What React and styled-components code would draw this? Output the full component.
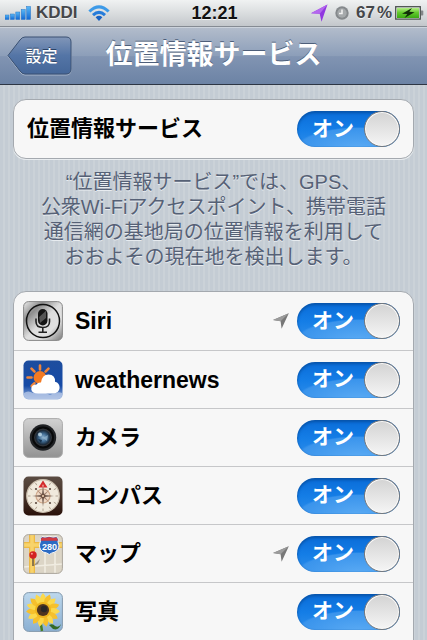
import React, { useState } from "react";
import styled, { createGlobalStyle } from "styled-components";

const GlobalStyle = createGlobalStyle`
  * { box-sizing: border-box; }
  body {
    margin: 0;
    background: #c7ced6;
    font-family: "Liberation Sans", "Noto Sans CJK JP", sans-serif;
  }
  svg { display: block; flex: none; }
`;

const Screen = styled.div`
  height: 100vh;
  display: flex;
  flex-direction: column;
`;

const StatusBar = styled.header`
  flex: none;
  height: 27px;
  padding: 0 3px 0 5px;
  display: grid;
  grid-template-columns: 1fr auto 1fr;
  align-items: center;
  background: linear-gradient(#f0f2f2, #dadddf 50%, #c3c7cb);
  border-bottom: 1px solid #858b93;
  color: #45474a;
  font-size: 17px;
  line-height: 26px;
  font-weight: 700;
  text-shadow: 0 1px 0 #f4f5f5;
`;

const StatusGroup = styled.div`
  display: flex;
  align-items: center;
  justify-content: ${(p) => (p.$end ? "flex-end" : "flex-start")};
  gap: ${(p) => (p.$end ? 7 : 5)}px;
`;

const Carrier = styled.span`
  margin-right: 5px;
`;

const Percent = styled.span`
  display: flex;
  gap: 2px;
  margin-right: -4px;
`;

const Clock = styled.time`
  color: #111;
  font-size: 18px;
`;

const NavBar = styled.nav`
  flex: none;
  height: 58px;
  padding: 0 6px;
  display: grid;
  grid-template-columns: 1fr auto 1fr;
  align-items: center;
  background: linear-gradient(#b2bccb, #8c9eb9 50%, #8194b2 51%, #6c83a5);
  border-top: 1px solid #ccd3dc;
  border-bottom: 1px solid #2d3644;
`;

const BackButton = styled.button`
  position: relative;
  width: 66px;
  height: 40px;
  padding: 0 0 2px 5px;
  border: 0;
  background: none;
  color: #fff;
  font-family: inherit;
  font-size: 16px;
  font-weight: 500;
  text-shadow: 0 -1px 0 #2c4468;
  cursor: pointer;
`;

const BackShape = styled.svg`
  position: absolute;
  inset: 0;
`;

const BackText = styled.span`
  position: relative;
`;

const Title = styled.h1`
  margin: 0;
  padding-bottom: 2px;
  color: #fff;
  font-size: 27px;
  line-height: 36px;
  font-weight: 700;
  text-shadow: 0 -1px 0 #4e5f7a;
`;

const Content = styled.main`
  flex: 1;
  min-height: 0;
  overflow-y: auto;
  scrollbar-width: none;
  padding: 14px 13px 0;
  background: repeating-linear-gradient(90deg, #c4ccd4 0 3px, #cbd2d8 3px 5px);
`;

const Group = styled.ul`
  list-style: none;
  margin: 0;
  padding: 0;
  background: #f7f7f7;
  border: 1px solid #a4a9af;
  border-radius: ${(p) => (p.$open ? "13px 13px 0 0" : "13px")};
  box-shadow: 0 1px 0 #e9edf0;
`;

const Row = styled.li`
  height: 58px;
  padding: 0 13px;
  display: flex;
  align-items: center;
  gap: 12px;

  & + & {
    border-top: 1px solid #c6c7c9;
  }
`;

const RowLabel = styled.label`
  flex: 1;
  font-size: ${(p) => (p.$latin ? 23 : 22)}px;
  line-height: 30px;
  font-weight: 700;
  color: #000;
`;

const AppIcon = styled.svg`
  margin-left: -4px;
`;

const Controls = styled.div`
  display: flex;
  align-items: center;
  gap: 8px;
`;

const SwitchTrack = styled.span`
  position: relative;
  flex: none;
  width: 103px;
  height: 36px;
  display: flex;
  align-items: center;
  justify-content: ${(p) => (p.$on ? "space-between" : "flex-start")};
  gap: 8px;
  padding-left: ${(p) => (p.$on ? 15 : 0)}px;
  border-radius: 18px;
  background: ${(p) =>
    p.$on
      ? "radial-gradient(ellipse 64px 22px at 62px 38px, #5babf4 0, #3a94ec 94%, transparent 100%), linear-gradient(#0a6cd8, #147de6 50%, #2f8eea)"
      : "linear-gradient(#d0d0d0, #f6f6f6)"};
  box-shadow: inset 0 2px 3px ${(p) => (p.$on ? "#0753a8" : "#999")}, inset 0 0 1px #1759a5;
  color: ${(p) => (p.$on ? "#fff" : "#777")};
  font-size: 21px;
  line-height: 32px;
  font-weight: 700;
  white-space: nowrap;
`;

const SwitchText = styled.span`
  padding-bottom: 1px;
`;

const SwitchKnob = styled.span`
  width: 36px;
  height: 36px;
  flex: none;
  border: 1px solid #77797c;
  border-radius: 50%;
  background: linear-gradient(#d3d3d3, #f5f5f5);
  box-shadow: inset 0 0 0 1px #fafafa;
`;

const SwitchInput = styled.input`
  position: absolute;
  inset: 0;
  width: 100%;
  height: 100%;
  margin: 0;
  opacity: 0;
  cursor: pointer;
`;

const Description = styled.p`
  margin: 0;
  padding: 11px 0 21px;
  color: #566176;
  font-size: 20px;
  line-height: 25px;
  text-align: center;
  text-shadow: 0 1px 0 #e8ecf0;
`;

function SignalIcon() {
  return (
    <svg width="26" height="14" viewBox="0 0 26 14" aria-hidden="true">
      <defs>
        <linearGradient id="signal" x1="0" x2="0" y1="0" y2="1">
          <stop offset="0" stopColor="#58b8f6" />
          <stop offset="1" stopColor="#1268d4" />
        </linearGradient>
      </defs>
      <g fill="url(#signal)" stroke="#2877c8" strokeWidth=".5">
        <rect x="0" y="9" width="4" height="4.5" />
        <rect x="5.4" y="8" width="4" height="5.5" />
        <rect x="10.8" y="6" width="4" height="7.5" />
        <rect x="16.2" y="3.5" width="4" height="10" />
        <rect x="21.6" y=".5" width="4" height="13" />
      </g>
    </svg>
  );
}

function WifiIcon() {
  return (
    <svg width="22" height="17" viewBox="0 0 22 17" fill="none" aria-hidden="true">
      <g strokeWidth="3">
        <path d="M1.4 6.5Q11-2.8 20.6 6.5" stroke="#3d9ae8" />
        <path d="M5 10.2Q11 4.6 17 10.2" stroke="#267cda" />
      </g>
      <path d="M7.6 12.2Q11 9.5 14.4 12.2L11 16Z" fill="#1762c4" />
    </svg>
  );
}

function StatusArrow() {
  return (
    <svg width="17" height="18" viewBox="0 0 17 18" aria-hidden="true">
      <path d="M16.5 .5L0 9.2L8.7 9.7L10.5 17.7Z" fill="#9037e0" />
      <path d="M16.5 .5L0 9.2L8.7 9.7Z" fill="#b467ee" />
    </svg>
  );
}

function AlarmIcon() {
  return (
    <svg width="14" height="14" viewBox="0 0 14 14" aria-hidden="true">
      <circle cx="7" cy="7" r="6.7" fill="#85898c" />
      <circle cx="7" cy="7" r="4.7" fill="#a5a9ab" />
      <path d="M7 3.5V7.5H4" fill="none" stroke="#f2f2f2" strokeWidth="1.5" />
    </svg>
  );
}

function BatteryIcon() {
  return (
    <svg width="29" height="14" viewBox="0 0 29 14" aria-hidden="true">
      <defs>
        <linearGradient id="battery" x1="0" x2="0" y1="0" y2="1">
          <stop offset="0" stopColor="#b4ee86" />
          <stop offset=".45" stopColor="#64ca2e" />
          <stop offset="1" stopColor="#39a812" />
        </linearGradient>
      </defs>
      <rect x=".7" y=".7" width="24.6" height="12.4" fill="#e9eee9" stroke="#4c5350" strokeWidth="1.3" />
      <rect x="2" y="2" width="22" height="10" fill="url(#battery)" />
      <path d="M26 4.5h1.5q.8 0 .8 1v3q0 1-.8 1H26z" fill="#838789" />
      <path d="M17 2L7 7.7L12.3 8L9.5 12L19.5 6.2L14.3 5.8Z" fill="#112e08" />
    </svg>
  );
}

function LocationArrow() {
  return (
    <svg width="16" height="16" viewBox="0 0 16 16" role="img" aria-label="位置情報を使用中">
      <path d="M15.8 .3L0 6.9L7.6 8.2L8.6 15.8Z" fill="#777" />
      <path d="M15.8 .3L0 6.9L7.6 8.2Z" fill="#9b9b9b" />
    </svg>
  );
}

function SiriIcon() {
  return (
    <AppIcon width="40" height="40" viewBox="0 0 40 40" aria-hidden="true">
      <defs>
        <linearGradient id="siri" x1="0" y1="0" x2="1" y2="1">
          <stop offset="0" stopColor="#eee" />
          <stop offset=".25" stopColor="#8d8d8d" />
          <stop offset=".5" stopColor="#ddd" />
          <stop offset=".72" stopColor="#e2e2e2" />
          <stop offset="1" stopColor="#777" />
        </linearGradient>
      </defs>
      <rect x=".6" y=".6" width="38.8" height="38.8" rx="5" fill="url(#siri)" stroke="#888" />
      <circle cx="20" cy="20" r="16.5" fill="none" stroke="#111" strokeWidth="1.5" />
      <rect x="15" y="8" width="9.5" height="16.5" rx="4.7" fill="#151515" />
      <path d="M16.2 16L23 9.7V17L17 22Z" fill="#555" />
      <path d="M13 17.5V20.5Q13 26.5 19.8 26.5T26.5 20.5V17.5M19.8 26.5V31M15.5 31.3H24" fill="none" stroke="#222" strokeWidth="1.6" />
    </AppIcon>
  );
}

function WeatherIcon() {
  return (
    <AppIcon width="40" height="40" viewBox="0 0 40 40" aria-hidden="true">
      <defs>
        <linearGradient id="sky" x1="0" x2="0" y1="0" y2="1">
          <stop offset="0" stopColor="#1d4d9e" />
          <stop offset=".65" stopColor="#164aa6" />
          <stop offset="1" stopColor="#9db8df" />
        </linearGradient>
      </defs>
      <rect x=".5" y=".5" width="39" height="39" rx="5" fill="url(#sky)" />
      <path d="M1 33Q5 30 10 33Q20 30 27 35Q34 31 39 33V36Q38 39 34 39H6Q2 39 1 36Z" fill="#b9cae8" opacity=".75" />
      <circle cx="17" cy="17.5" r="6.4" fill="#f47a22" />
      <path d="M17 5.5V9.5M8.5 8.7L11.5 11.7M4.5 17.5H8.5M25.5 8.7L22.5 11.7M8.7 26L11.5 23.2" stroke="#f0853a" strokeWidth="2.6" strokeLinecap="round" />
      <path d="M16 33.5Q9 33.8 8.3 29.5Q8 24.5 13.5 24.5Q15 22 18 22.5Q19 14.5 25.5 14.5Q32.5 14.8 32 21.8Q36.8 23 36.6 28Q36 33 30 33.5Z" fill="#fff" />
    </AppIcon>
  );
}

function CameraIcon() {
  return (
    <AppIcon width="40" height="40" viewBox="0 0 40 40" aria-hidden="true">
      <defs>
        <linearGradient id="body" x1="0" x2="0" y1="0" y2="1">
          <stop offset="0" stopColor="#d2d2d2" />
          <stop offset="1" stopColor="#929292" />
        </linearGradient>
        <radialGradient id="lens">
          <stop offset="0" stopColor="#91b4d0" />
          <stop offset=".5" stopColor="#426d94" />
          <stop offset="1" stopColor="#14202d" />
        </radialGradient>
      </defs>
      <rect x=".6" y=".6" width="38.8" height="38.8" rx="5" fill="url(#body)" stroke="#aaa" />
      <circle cx="20" cy="19.5" r="13.2" fill="#202225" />
      <circle cx="20" cy="19.5" r="10" fill="#30343a" stroke="#08090a" strokeWidth="2" />
      <circle cx="20" cy="19.5" r="7.6" fill="url(#lens)" />
      <circle cx="17" cy="16.5" r="2" fill="#c6deec" opacity=".8" />
      <path d="M20 20L25 17L24 23Z" fill="#9bbbd3" opacity=".65" />
      <path d="M15 21L19 22L18 25Z" fill="#15304a" />
    </AppIcon>
  );
}

const compassAngles = [0, 30, 60, 90, 120, 150, 180, 210, 240, 270, 300, 330];

function CompassIcon() {
  return (
    <AppIcon width="40" height="40" viewBox="0 0 40 40" aria-hidden="true">
      <defs>
        <linearGradient id="wood" x1="0" x2="0" y1="0" y2="1">
          <stop offset="0" stopColor="#5b4c42" />
          <stop offset=".5" stopColor="#47342b" />
          <stop offset="1" stopColor="#291009" />
        </linearGradient>
      </defs>
      <rect x=".5" y=".5" width="39" height="39" rx="5" fill="url(#wood)" />
      <circle cx="20" cy="20" r="16.3" fill="#f1eadd" stroke="#cbbfae" strokeWidth="1.2" />
      {compassAngles.map((angle) => (
        <path key={angle} d="M20 5V7.5" stroke="#a39382" strokeWidth=".8" transform={`rotate(${angle} 20 20)`} />
      ))}
      <circle cx="20" cy="20" r="7" fill="#efd8c4" stroke="#d0a98c" strokeWidth="1.2" />
      <path d="M20 9L21 19L31 20L21 21L20 31L19 21L9 20L19 19Z" fill="#675247" />
      <path d="M13.5 13.5L20 18.8L26.5 13.5L21.2 20L26.5 26.5L20 21.2L13.5 26.5L18.8 20Z" fill="#a58472" />
      <g fill="#5d4a40">
        <circle cx="13" cy="13" r="1.1" />
        <circle cx="27" cy="13" r="1.1" />
        <circle cx="27" cy="27" r="1.1" />
        <circle cx="13" cy="27" r="1.1" />
      </g>
      <circle cx="20" cy="20" r="1.8" fill="#d5b59a" stroke="#604437" />
      <path d="M20 4.5L24.5 11.5H15.5Z" fill="#d42b2c" />
      <path d="M20 8L21 10.5H19Z" fill="#f2bab0" />
    </AppIcon>
  );
}

function MapIcon() {
  return (
    <AppIcon width="40" height="40" viewBox="0 0 40 40" aria-hidden="true">
      <defs>
        <clipPath id="mapClip"><rect x=".5" y=".5" width="39" height="39" rx="5" /></clipPath>
      </defs>
      <g clipPath="url(#mapClip)">
        <rect width="40" height="40" fill="#dcd5c6" />
        <path d="M22 14V40M32 19V40M0 33L40 30" stroke="#f0ece1" strokeWidth="1.6" />
        <path d="M0 11H40" stroke="#edb944" strokeWidth="6" />
        <path d="M9 0V40" stroke="#edb944" strokeWidth="6" />
        <path d="M9 0V40M0 11H40" stroke="#f8d36a" strokeWidth="3.5" />
      </g>
      <path d="M17.5 7Q16.5 4 19 2.5Q22 4 26 2.2Q30 4 33.5 2.5Q36.5 5 35 8Q38 15 32 18Q28 19 26.3 20.5Q24 18.5 20 18Q14.5 14 17.5 7Z" fill="#2c6bc4" stroke="#f5f5f5" />
      <path d="M17.7 6.8Q17.5 4.2 19.3 3.2Q22 4.5 26.2 3Q30 4.5 33.2 3.2Q35.2 5 34.8 6.8Z" fill="#d13b42" />
      <text x="26.4" y="15.5" textAnchor="middle" fontSize="9" fontWeight="700" fill="#fff">280</text>
      <path d="M10 22V32" stroke="#54483d" strokeWidth="1.3" />
      <path d="M10 32L17 25L15 30Z" fill="#786f62" opacity=".65" />
      <circle cx="10" cy="21" r="3.7" fill="#d32224" />
      <circle cx="8.9" cy="19.8" r="1" fill="#f49c91" />
      <rect x=".6" y=".6" width="38.8" height="38.8" rx="5" fill="none" stroke="#aaa59c" />
    </AppIcon>
  );
}

const petalAngles = [0, 24, 48, 72, 96, 120, 144, 168, 192, 216, 240, 264, 288, 312, 336];

function PhotosIcon() {
  return (
    <AppIcon width="40" height="40" viewBox="0 0 40 40" aria-hidden="true">
      <defs>
        <linearGradient id="photoSky" x1="0" x2="0" y1="0" y2="1">
          <stop offset="0" stopColor="#bdd8ed" />
          <stop offset="1" stopColor="#8aafd2" />
        </linearGradient>
      </defs>
      <rect x=".6" y=".6" width="38.8" height="38.8" rx="5" fill="url(#photoSky)" stroke="#8499ac" />
      <path d="M18 24Q17 31 19 39" fill="none" stroke="#477e25" strokeWidth="2.5" />
      <path d="M26 33Q30 31 32 34Q36 36 38 32Q36 39 30 37Z" fill="#356a27" />
      <g transform="translate(20 18)">
        {petalAngles.map((angle) => (
          <path key={angle} d="M0-4Q-6-11 0-17Q6-11 0-4Z" fill={angle % 48 ? "#f6c02c" : "#fbd94c"} transform={`rotate(${angle})`} />
        ))}
        <circle r="8" fill="#eeb51e" />
        <circle r="6.1" fill="#4f3520" />
        <circle cx="1" cy="-1" r="3.2" fill="#292727" />
      </g>
    </AppIcon>
  );
}

const apps = [
  { id: "siri", name: "Siri", Icon: SiriIcon, latin: true, recent: true },
  { id: "weather", name: "weathernews", Icon: WeatherIcon, latin: true },
  { id: "camera", name: "カメラ", Icon: CameraIcon },
  { id: "compass", name: "コンパス", Icon: CompassIcon },
  { id: "maps", name: "マップ", Icon: MapIcon, recent: true },
  { id: "photos", name: "写真", Icon: PhotosIcon },
];

function Switch({ id }) {
  const [on, setOn] = useState(true);
  return (
    <SwitchTrack $on={on}>
      {on && <SwitchText aria-hidden="true">オン</SwitchText>}
      <SwitchKnob />
      {!on && <SwitchText aria-hidden="true">オフ</SwitchText>}
      <SwitchInput id={id} type="checkbox" role="switch" checked={on} onChange={() => setOn(!on)} />
    </SwitchTrack>
  );
}

export default function App() {
  return (
    <Screen lang="ja">
      <GlobalStyle />
      <StatusBar>
        <StatusGroup>
          <SignalIcon />
          <Carrier>KDDI</Carrier>
          <WifiIcon />
        </StatusGroup>
        <Clock>12:21</Clock>
        <StatusGroup $end>
          <StatusArrow />
          <AlarmIcon />
          <Percent><span>67</span><span>%</span></Percent>
          <BatteryIcon />
        </StatusGroup>
      </StatusBar>
      <NavBar>
        <BackButton type="button">
          <BackShape width="66" height="40" viewBox="0 0 66 40" aria-hidden="true">
            <defs>
              <linearGradient id="back" x1="0" x2="0" y1="0" y2="1">
                <stop offset="0" stopColor="#8196b8" />
                <stop offset=".5" stopColor="#5475a6" />
                <stop offset="1" stopColor="#456799" />
              </linearGradient>
            </defs>
            <path d="M19 2H60Q65 2 65 7V34Q65 39 60 39H19Q16 39 14 36L2 20.5L14 5Q16 2 19 2Z" fill="none" stroke="#a5b4ca" />
            <path d="M19 1H60Q65 1 65 6V33Q65 38 60 38H19Q16 38 14 35L2 19.5L14 4Q16 1 19 1Z" fill="url(#back)" stroke="#3b5172" />
          </BackShape>
          <BackText>設定</BackText>
        </BackButton>
        <Title>位置情報サービス</Title>
      </NavBar>
      <Content>
        <Group>
          <Row>
            <RowLabel htmlFor="location-services">位置情報サービス</RowLabel>
            <Switch id="location-services" />
          </Row>
        </Group>
        <Description>
          “位置情報サービス”では、GPS、
          <br />
          公衆Wi-Fiアクセスポイント、携帯電話
          <br />
          通信網の基地局の位置情報を利用して
          <br />
          おおよその現在地を検出します。
        </Description>
        <Group $open>
          {apps.map(({ id, name, Icon, latin, recent }) => (
            <Row key={id}>
              <Icon />
              <RowLabel $latin={latin} htmlFor={id}>{name}</RowLabel>
              <Controls>
                {recent && <LocationArrow />}
                <Switch id={id} />
              </Controls>
            </Row>
          ))}
        </Group>
      </Content>
    </Screen>
  );
}
